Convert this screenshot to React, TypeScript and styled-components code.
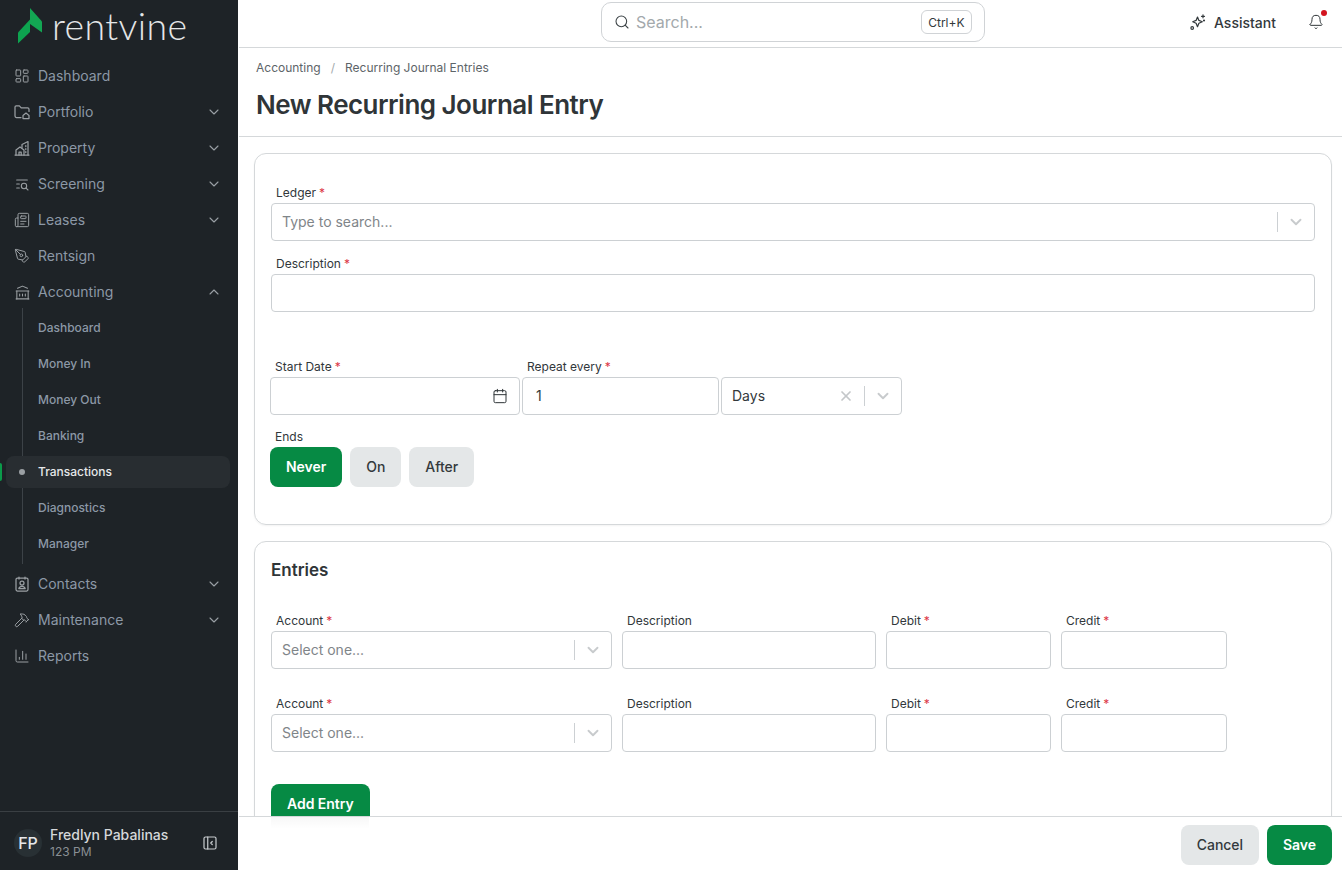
import { ReactNode } from 'react'
import styled, { createGlobalStyle } from 'styled-components'
import {
  Bell,
  Calendar,
  ChartColumn,
  ChevronDown,
  ChevronUp,
  Hammer,
  LayoutDashboard,
  Newspaper,
  PenTool,
  Search,
  X,
} from 'lucide-react'
import { TbBuildingBank, TbLayoutSidebarLeftCollapse, TbListSearch } from 'react-icons/tb'

const GlobalStyle = createGlobalStyle`
  * { box-sizing: border-box; }
  html, body { margin: 0; height: 100%; overflow: hidden; }
  body { font-family: Inter, "Liberation Sans", sans-serif; background: #fff; color: #2f3538; }
`

function PortfolioIcon() {
  return (
    <svg width="16" height="16" viewBox="0 0 16 16" fill="none" stroke="currentColor" strokeWidth="1.25" strokeLinecap="round" strokeLinejoin="round">
      <path d="M7 13.5H2.4A1.4 1.4 0 0 1 1 12.1V3A1.2 1.2 0 0 1 2.2 1.8h3.2l1.8 2h6.4A1.4 1.4 0 0 1 15 5.2v2.2" />
      <path d="M9 11.5l3-2.4 3 2.4v3H9z" />
    </svg>
  )
}

function PropertyIcon() {
  return (
    <svg width="16" height="16" viewBox="0 0 16 16" fill="none" stroke="currentColor" strokeWidth="1.25" strokeLinecap="round" strokeLinejoin="round">
      <path d="M1 15h14" />
      <path d="M14 15V1.5L8 4.5v3" />
      <path d="M2 15V10l4-3 4 3v5" />
      <path d="M5 15v-3h2.2v3" />
      <path d="M11.8 5.5v1M11.8 8.5v1M11.8 11.5v1" />
    </svg>
  )
}

function ContactsIcon() {
  return (
    <svg width="16" height="16" viewBox="0 0 16 16" fill="none" stroke="currentColor" strokeWidth="1.25" strokeLinecap="round" strokeLinejoin="round">
      <rect x="2" y="2.2" width="12" height="12.8" rx="1.4" />
      <path d="M5 1v2M11 1v2" />
      <circle cx="8" cy="7" r="2" />
      <path d="M4.8 12.6c.5-1.6 1.7-2.3 3.2-2.3s2.7.7 3.2 2.3z" />
    </svg>
  )
}

function AssistantIcon() {
  return (
    <svg width="16" height="16" viewBox="0 0 16 16" fill="none" stroke="currentColor" strokeWidth="1.2" strokeLinecap="round" strokeLinejoin="round">
      <path d="M7.5 3l1.4 3.4 3.4 1.4-3.4 1.5-1.4 3.4-1.4-3.4-3.4-1.5 3.4-1.4z" />
      <path d="M13 0.8v3M11.5 2.3h3" />
      <circle cx="14" cy="6.5" r="0.5" />
      <circle cx="2.2" cy="14" r="1.3" />
    </svg>
  )
}

function Logo() {
  return (
    <LogoRow>
      <svg width="24" height="36" viewBox="0 0 24 36">
        <path d="M12 0L24 13.5V24.5L12 16z" fill="#13a653" />
        <path d="M0 24.5L12 11.5V24L0 35.5z" fill="#0da34f" />
      </svg>
      <LogoText>rentvine</LogoText>
    </LogoRow>
  )
}

type NavProps = { icon: ReactNode; label: string; caret?: 'up' | 'down' }

function NavItem({ icon, label, caret }: NavProps) {
  return (
    <NavRow>
      <NavIcon>{icon}</NavIcon>
      <NavLabel>{label}</NavLabel>
      {caret === 'down' && <ChevronDown size={16} strokeWidth={1.6} />}
      {caret === 'up' && <ChevronUp size={16} strokeWidth={1.6} />}
    </NavRow>
  )
}

function Required({ children }: { children: ReactNode }) {
  return (
    <FieldLabel>
      {children} <Star>*</Star>
    </FieldLabel>
  )
}

function SelectCaret() {
  return (
    <>
      <SelectDivider />
      <CaretSlot>
        <ChevronDown size={18} strokeWidth={2.5} />
      </CaretSlot>
    </>
  )
}

function EntryRow() {
  return (
    <EntryGrid>
      <div>
        <Required>Account</Required>
        <SelectBox>
          <Placeholder>Select one...</Placeholder>
          <SelectCaret />
        </SelectBox>
      </div>
      <div>
        <FieldLabel>Description</FieldLabel>
        <InputBox />
      </div>
      <div>
        <Required>Debit</Required>
        <InputBox />
      </div>
      <div>
        <Required>Credit</Required>
        <InputBox />
      </div>
    </EntryGrid>
  )
}

export default function App() {
  return (
    <Shell>
      <GlobalStyle />
      <Sidebar>
        <Logo />
        <Nav>
          <NavItem icon={<LayoutDashboard size={16} strokeWidth={1.5} />} label="Dashboard" />
          <NavItem icon={<PortfolioIcon />} label="Portfolio" caret="down" />
          <NavItem icon={<PropertyIcon />} label="Property" caret="down" />
          <NavItem icon={<TbListSearch size={16} strokeWidth={1.6} />} label="Screening" caret="down" />
          <NavItem icon={<Newspaper size={16} strokeWidth={1.5} />} label="Leases" caret="down" />
          <NavItem icon={<PenTool size={16} strokeWidth={1.5} />} label="Rentsign" />
          <NavItem icon={<TbBuildingBank size={17} strokeWidth={1.5} />} label="Accounting" caret="up" />
          <SubList>
            <SubRow>Dashboard</SubRow>
            <SubRow>Money In</SubRow>
            <SubRow>Money Out</SubRow>
            <SubRow>Banking</SubRow>
            <SubRow $active>
              <ActiveMark />
              <ActiveDot />
              Transactions
            </SubRow>
            <SubRow>Diagnostics</SubRow>
            <SubRow>Manager</SubRow>
          </SubList>
          <NavItem icon={<ContactsIcon />} label="Contacts" caret="down" />
          <NavItem icon={<Hammer size={16} strokeWidth={1.5} />} label="Maintenance" caret="down" />
          <NavItem icon={<ChartColumn size={16} strokeWidth={1.5} />} label="Reports" />
        </Nav>
        <UserBar>
          <Avatar>FP</Avatar>
          <UserText>
            <UserName>Fredlyn Pabalinas</UserName>
            <UserOrg>123 PM</UserOrg>
          </UserText>
          <TbLayoutSidebarLeftCollapse size={18} strokeWidth={1.6} color="#c9cdd0" />
        </UserBar>
      </Sidebar>
      <Main>
        <TopBar>
          <SearchBox>
            <Search size={16} strokeWidth={1.6} color="#3c4346" />
            <SearchText>Search...</SearchText>
            <Kbd>Ctrl+K</Kbd>
          </SearchBox>
          <TopActions>
            <AssistantButton>
              <AssistantIcon />
              Assistant
            </AssistantButton>
            <BellWrap>
              <Bell size={16} strokeWidth={1.5} />
              <BellDot />
            </BellWrap>
          </TopActions>
        </TopBar>
        <PageHeader>
          <Crumbs>
            <span>Accounting</span>
            <CrumbSep>/</CrumbSep>
            <span>Recurring Journal Entries</span>
          </Crumbs>
          <Title>New Recurring Journal Entry</Title>
        </PageHeader>
        <Scroll>
          <Card>
            <FieldStack>
              <div>
                <Required>Ledger</Required>
                <SelectBox>
                  <Placeholder>Type to search...</Placeholder>
                  <SelectCaret />
                </SelectBox>
              </div>
              <div>
                <Required>Description</Required>
                <InputBox />
              </div>
            </FieldStack>
            <ScheduleRow>
              <div>
                <Required>Start Date</Required>
                <InputBox>
                  <Spacer />
                  <Calendar size={16} strokeWidth={1.5} color="#2f3538" />
                </InputBox>
              </div>
              <div>
                <Required>Repeat every</Required>
                <InputBox>
                  <Value $indent>1</Value>
                </InputBox>
              </div>
              <SelfEnd>
                <SelectBox>
                  <Value>Days</Value>
                  <ClearIcon>
                    <X size={16} strokeWidth={2.6} />
                  </ClearIcon>
                  <SelectCaret />
                </SelectBox>
              </SelfEnd>
            </ScheduleRow>
            <EndsBlock>
              <FieldLabel>Ends</FieldLabel>
              <ButtonRow>
                <Button $primary>Never</Button>
                <Button>On</Button>
                <Button>After</Button>
              </ButtonRow>
            </EndsBlock>
          </Card>
          <Card>
            <CardTitle>Entries</CardTitle>
            <EntryList>
              <EntryRow />
              <EntryRow />
            </EntryList>
            <AddRow>
              <Button $primary>Add Entry</Button>
            </AddRow>
          </Card>
        </Scroll>
        <FooterBar>
          <Button>Cancel</Button>
          <Button $primary>Save</Button>
        </FooterBar>
      </Main>
    </Shell>
  )
}

const Shell = styled.div`
  display: flex;
  height: 100vh;
  overflow: hidden;
`

const Sidebar = styled.aside`
  width: 238px;
  flex: none;
  display: flex;
  flex-direction: column;
  background: #1e2327;
  color: #8c98a6;
`

const LogoRow = styled.div`
  height: 58px;
  flex: none;
  display: flex;
  align-items: center;
  gap: 10px;
  padding: 0 0 6px 18px;
`

const LogoText = styled.span`
  font-family: Lato, Inter, sans-serif;
  font-size: 37.5px;
  font-weight: 300;
  line-height: 1;
  letter-spacing: 0.4px;
  color: #e4e6e8;
`

const Nav = styled.nav`
  flex: 1;
  display: flex;
  flex-direction: column;
`

const NavRow = styled.div`
  height: 36px;
  flex: none;
  display: flex;
  align-items: center;
  padding: 0 16px 0 14px;
  color: #9aa0a5;
`

const NavIcon = styled.span`
  width: 24px;
  height: 16px;
  display: flex;
  align-items: center;
  color: #9a9fa3;
`

const NavLabel = styled.span`
  flex: 1;
  font-size: 14px;
  line-height: 20px;
  color: #8c98a6;
`

const SubList = styled.div`
  position: relative;
  padding-bottom: 4px;
  &::before {
    content: '';
    position: absolute;
    left: 22px;
    top: -2px;
    bottom: 2px;
    width: 1px;
    background: #3c4247;
  }
`

const SubRow = styled.div<{ $active?: boolean }>`
  position: relative;
  height: ${(p) => (p.$active ? '32px' : '36px')};
  margin: ${(p) => (p.$active ? '2px 8px 2px 6px' : '0')};
  padding: 0 0 2px ${(p) => (p.$active ? '32px' : '38px')};
  display: flex;
  align-items: center;
  border-radius: 8px;
  font-size: 12px;
  font-weight: ${(p) => (p.$active ? 500 : 450)};
  background: ${(p) => (p.$active ? '#282d31' : 'transparent')};
  color: ${(p) => (p.$active ? '#e6e8ea' : '#8c98a6')};
`

const ActiveMark = styled.span`
  position: absolute;
  left: -6px;
  top: 7px;
  width: 2px;
  height: 18px;
  border-radius: 0 2px 2px 0;
  background: #0b9a4a;
`

const ActiveDot = styled.span`
  position: absolute;
  left: 13px;
  top: 13px;
  width: 6px;
  height: 6px;
  border-radius: 50%;
  background: #9a9fa3;
`

const UserBar = styled.div`
  height: 59px;
  flex: none;
  display: flex;
  align-items: center;
  gap: 8px;
  padding: 3px 19px 0 14px;
  border-top: 1px solid #3a3f43;
`

const Avatar = styled.div`
  width: 28px;
  height: 28px;
  border-radius: 50%;
  display: flex;
  align-items: center;
  justify-content: center;
  background: #283034;
  color: #e6e8ea;
  font-size: 16px;
  font-weight: 500;
`

const UserText = styled.div`
  flex: 1;
  display: flex;
  flex-direction: column;
`

const UserName = styled.div`
  font-size: 14px;
  line-height: 18px;
  font-weight: 450;
  color: #d5d8da;
`

const UserOrg = styled.div`
  font-size: 12px;
  line-height: 16px;
  color: #8a9095;
`

const Main = styled.main`
  flex: 1;
  min-width: 0;
  display: flex;
  flex-direction: column;
  border-left: 1px solid #fff;
`

const TopBar = styled.header`
  height: 48px;
  flex: none;
  display: flex;
  align-items: flex-start;
  justify-content: space-between;
  padding: 2px 18px 0 362px;
  border-bottom: 1px solid #d5d8da;
`

const SearchBox = styled.div`
  width: 384px;
  height: 40px;
  display: flex;
  align-items: center;
  gap: 6px;
  padding: 0 12px;
  border: 1px solid #d0d3d6;
  border-radius: 10px;
`

const SearchText = styled.span`
  flex: 1;
  font-size: 16px;
  color: #a3a9ac;
`

const Kbd = styled.span`
  height: 24px;
  padding: 0 6.5px;
  display: flex;
  align-items: center;
  border: 1px solid #d0d3d6;
  border-radius: 6px;
  font-size: 12px;
  font-weight: 400;
  color: #33393c;
`

const TopActions = styled.div`
  height: 40px;
  display: flex;
  align-items: center;
  gap: 32px;
`

const AssistantButton = styled.div`
  display: flex;
  align-items: center;
  gap: 8px;
  font-size: 14px;
  font-weight: 450;
  color: #33393c;
`

const BellWrap = styled.span`
  position: relative;
  display: flex;
  color: #2f3538;
`

const BellDot = styled.span`
  position: absolute;
  right: -3px;
  top: -4px;
  width: 6px;
  height: 6px;
  border-radius: 50%;
  background: #d3141f;
`

const PageHeader = styled.div`
  height: 89px;
  flex: none;
  padding: 11px 17px 0;
  border-bottom: 1px solid #d5d8da;
`

const Crumbs = styled.div`
  display: flex;
  gap: 10px;
  font-size: 12px;
  line-height: 18px;
  color: #5d6468;
`

const CrumbSep = styled.span`
  color: #a3a9ac;
`

const Title = styled.h1`
  margin: 10px 0 0;
  font-size: 26px;
  line-height: 36px;
  font-weight: 600;
  letter-spacing: -0.52px;
  color: #2f3538;
`

const Scroll = styled.div`
  flex: 1;
  min-height: 0;
  overflow: hidden;
  display: flex;
  flex-direction: column;
  gap: 16px;
  padding: 16px 10px 0 15px;
`

const Card = styled.section`
  flex: none;
  padding: 16px;
  border: 1px solid #d5d8da;
  border-radius: 12px;
  box-shadow: 0 1px 2px rgba(0, 0, 0, 0.05);
  &:first-child {
    padding-top: 29px;
    padding-bottom: 37px;
  }
`

const FieldStack = styled.div`
  display: flex;
  flex-direction: column;
  gap: 13px;
`

const FieldLabel = styled.label`
  display: flex;
  gap: 3px;
  height: 20px;
  align-items: center;
  padding: 0 0 2px 5px;
  font-size: 12px;
  color: #31373b;
`

const Star = styled.span`
  color: #dc3545;
`

const SelectBox = styled.div`
  height: 38px;
  display: flex;
  align-items: center;
  padding-left: 10px;
  border: 1px solid #ccd0d3;
  border-radius: 4px;
  background: #fff;
`

const InputBox = styled.div`
  height: 38px;
  display: flex;
  align-items: center;
  padding: 0 11px 0 0;
  border: 1px solid #ccd0d3;
  border-radius: 4px;
  background: #fff;
`

const Placeholder = styled.span`
  flex: 1;
  padding-bottom: 2px;
  font-size: 14px;
  color: #7f8589;
`

const Value = styled.span<{ $indent?: boolean }>`
  flex: 1;
  padding: 0 0 2px ${(p) => (p.$indent ? '13px' : '0')};
  font-size: 14px;
  color: #33393c;
`

const Spacer = styled.span`
  flex: 1;
`

const ClearIcon = styled.span`
  display: flex;
  margin-right: 10px;
  color: #c4c7c9;
`

const SelectDivider = styled.span`
  width: 1px;
  height: 20px;
  background: #ccd0d3;
`

const CaretSlot = styled.span`
  width: 36px;
  display: flex;
  justify-content: center;
  color: #c8cbcd;
`

const ScheduleRow = styled.div`
  display: grid;
  grid-template-columns: 250px 197px 181px;
  gap: 2px;
  margin: 45px 0 0 -1px;
`

const SelfEnd = styled.div`
  align-self: end;
`

const EndsBlock = styled.div`
  margin: 12px 0 0 -1px;
`

const ButtonRow = styled.div`
  display: flex;
  gap: 8px;
`

const Button = styled.button<{ $primary?: boolean }>`
  height: 40px;
  padding: 0 16px 1px;
  border: none;
  border-radius: 8px;
  font-family: inherit;
  font-size: 14px;
  font-weight: ${(p) => (p.$primary ? 600 : 500)};
  letter-spacing: -0.04px;
  background: ${(p) => (p.$primary ? '#068a44' : '#e4e7e8')};
  color: ${(p) => (p.$primary ? '#fff' : '#33393c')};
`

const CardTitle = styled.h2`
  margin: 0;
  font-size: 17px;
  line-height: 25px;
  font-weight: 600;
  color: #2f3538;
`

const EntryList = styled.div`
  display: flex;
  flex-direction: column;
  gap: 25px;
  margin-top: 28px;
`

const EntryGrid = styled.div`
  display: grid;
  grid-template-columns: 341px 254px 165px 166px;
  gap: 10px;
`

const AddRow = styled.div`
  margin-top: 32px;
`

const FooterBar = styled.footer`
  position: relative;
  height: 54px;
  flex: none;
  display: flex;
  justify-content: flex-end;
  align-items: flex-start;
  gap: 8px;
  padding: 8px 10px 0 0;
  border-top: 1px solid #d5d8da;
  background: #fff;
  &::before {
    content: '';
    position: absolute;
    left: 32px;
    top: 0;
    width: 98px;
    height: 12px;
    background: linear-gradient(rgba(0, 0, 0, 0.03), rgba(0, 0, 0, 0));
  }
`
